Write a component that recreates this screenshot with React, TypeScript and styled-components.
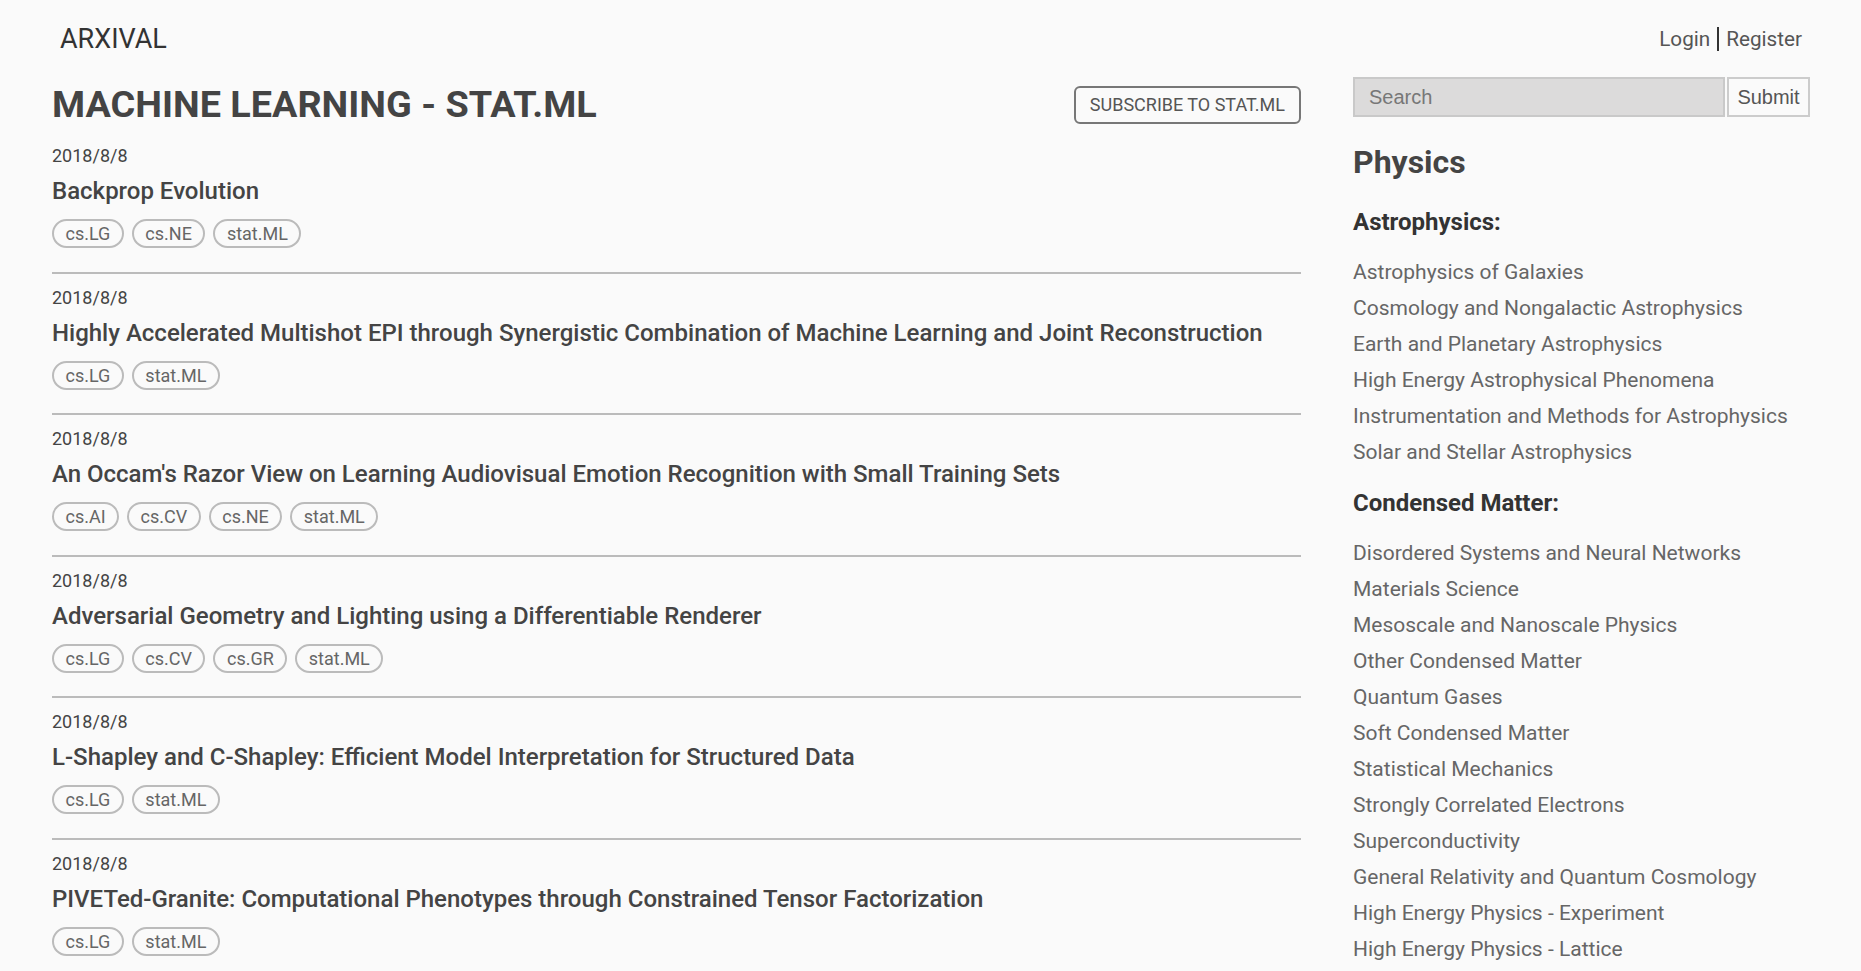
import React from 'react';
import styled, { createGlobalStyle } from 'styled-components';

const GlobalStyle = createGlobalStyle`
  html, body {
    margin: 0;
    padding: 0;
    background: #fafafa;
    font-family: Roboto, "Liberation Sans", sans-serif;
    color: #444;
  }
  * { box-sizing: border-box; }
`;

const Header = styled.header`
  height: 77px;
  padding: 0 59px 0 60px;
  display: flex;
  align-items: center;
  justify-content: space-between;
`;

const Logo = styled.div`
  font-size: 27px;
  color: #333;
`;

const AuthLinks = styled.div`
  display: flex;
  align-items: center;
  gap: 7px;
  font-size: 20.7px;
  color: #555;
`;

const Divider = styled.span`
  width: 2px;
  height: 24px;
  background: #333;
`;

const Main = styled.main`
  display: grid;
  grid-template-columns: 1fr 457px;
  gap: 52px;
  padding: 0 51px 0 52px;
`;

const Feed = styled.section`
  display: flex;
  flex-direction: column;
`;

const TitleRow = styled.div`
  height: 55px;
  display: flex;
  align-items: center;
  justify-content: space-between;
`;

const PageTitle = styled.h1`
  margin: -2px 0 0;
  font-size: 37.8px;
  font-weight: 700;
  color: #444;
`;

const SubscribeButton = styled.button`
  height: 38px;
  padding: 0 14px;
  border: 2px solid #777;
  border-radius: 6px;
  background: transparent;
  font-family: Roboto, sans-serif;
  font-size: 18px;
  color: #555;
`;

const Entry = styled.article`
  padding: 13px 0 23.5px;
  border-bottom: 2px solid #bbb;
`;

const EntryDate = styled.div`
  font-size: 18px;
  line-height: 22px;
  color: #444;
  margin-bottom: 9px;
`;

const EntryTitle = styled.h2`
  margin: 0;
  font-size: 24px;
  line-height: 30px;
  font-weight: 500;
  color: #444;
`;

const Tags = styled.div`
  display: flex;
  gap: 8px;
  margin-top: 13px;
`;

const Tag = styled.span`
  height: 29px;
  padding: 0 11.5px;
  border: 2px solid #bbb;
  border-radius: 15px;
  font-size: 18px;
  line-height: 25px;
  color: #666;
`;

const Sidebar = styled.aside`
  display: flex;
  flex-direction: column;
`;

const SearchRow = styled.form`
  display: flex;
  gap: 2px;
  height: 40px;
`;

const SearchInput = styled.input`
  flex: 1;
  min-width: 0;
  height: 40px;
  border: 2px solid #c9c9c9;
  background: #dcdbdb;
  padding: 0 14px;
  font-family: "Liberation Sans", Arial, sans-serif;
  font-size: 20px;
  color: #444;
  &::placeholder { color: #777; }
`;

const SubmitButton = styled.button`
  width: 83px;
  height: 40px;
  border: 2px solid #ccc;
  background: #fafafa;
  font-family: "Liberation Sans", Arial, sans-serif;
  font-size: 20px;
  color: #555;
  padding: 0;
`;

const CategoryTitle = styled.h2`
  margin: 25px 0 0;
  font-size: 32px;
  line-height: 40px;
  font-weight: 700;
  color: #444;
`;

const GroupTitle = styled.h3<{ first?: boolean }>`
  margin: ${({ first }) => (first ? '25px' : '18px')} 0 17px;
  font-size: 24px;
  line-height: 30px;
  font-weight: 700;
  color: #333;
`;

const TopicList = styled.ul`
  list-style: none;
  margin: 0;
  padding: 0;
`;

const Topic = styled.li`
  font-size: 21px;
  line-height: 36px;
  color: #666;
`;

const entries = [
  { date: '2018/8/8', title: 'Backprop Evolution', tags: ['cs.LG', 'cs.NE', 'stat.ML'] },
  {
    date: '2018/8/8',
    title: 'Highly Accelerated Multishot EPI through Synergistic Combination of Machine Learning and Joint Reconstruction',
    tags: ['cs.LG', 'stat.ML'],
  },
  {
    date: '2018/8/8',
    title: "An Occam's Razor View on Learning Audiovisual Emotion Recognition with Small Training Sets",
    tags: ['cs.AI', 'cs.CV', 'cs.NE', 'stat.ML'],
  },
  {
    date: '2018/8/8',
    title: 'Adversarial Geometry and Lighting using a Differentiable Renderer',
    tags: ['cs.LG', 'cs.CV', 'cs.GR', 'stat.ML'],
  },
  {
    date: '2018/8/8',
    title: 'L-Shapley and C-Shapley: Efficient Model Interpretation for Structured Data',
    tags: ['cs.LG', 'stat.ML'],
  },
  {
    date: '2018/8/8',
    title: 'PIVETed-Granite: Computational Phenotypes through Constrained Tensor Factorization',
    tags: ['cs.LG', 'stat.ML'],
  },
  {
    date: '2018/8/7',
    title: 'Deep Learning for Classification Tasks on Geospatial Vector Polygons',
    tags: ['cs.LG', 'stat.ML'],
  },
];

const groups = [
  {
    name: 'Astrophysics:',
    topics: [
      'Astrophysics of Galaxies',
      'Cosmology and Nongalactic Astrophysics',
      'Earth and Planetary Astrophysics',
      'High Energy Astrophysical Phenomena',
      'Instrumentation and Methods for Astrophysics',
      'Solar and Stellar Astrophysics',
    ],
  },
  {
    name: 'Condensed Matter:',
    topics: [
      'Disordered Systems and Neural Networks',
      'Materials Science',
      'Mesoscale and Nanoscale Physics',
      'Other Condensed Matter',
      'Quantum Gases',
      'Soft Condensed Matter',
      'Statistical Mechanics',
      'Strongly Correlated Electrons',
      'Superconductivity',
      'General Relativity and Quantum Cosmology',
      'High Energy Physics - Experiment',
      'High Energy Physics - Lattice',
      'High Energy Physics - Phenomenology',
      'High Energy Physics - Theory',
      'Mathematical Physics',
    ],
  },
];

export default function App() {
  return (
    <>
      <GlobalStyle />
      <Header>
        <Logo>ARXIVAL</Logo>
        <AuthLinks>
          <span>Login</span>
          <Divider />
          <span>Register</span>
        </AuthLinks>
      </Header>
      <Main>
        <Feed>
          <TitleRow>
            <PageTitle>MACHINE LEARNING - STAT.ML</PageTitle>
            <SubscribeButton>SUBSCRIBE TO STAT.ML</SubscribeButton>
          </TitleRow>
          {entries.map((e, i) => (
            <Entry key={i}>
              <EntryDate>{e.date}</EntryDate>
              <EntryTitle>{e.title}</EntryTitle>
              <Tags>
                {e.tags.map((t) => (
                  <Tag key={t}>{t}</Tag>
                ))}
              </Tags>
            </Entry>
          ))}
        </Feed>
        <Sidebar>
          <SearchRow onSubmit={(ev) => ev.preventDefault()}>
            <SearchInput placeholder="Search" />
            <SubmitButton type="submit">Submit</SubmitButton>
          </SearchRow>
          <CategoryTitle>Physics</CategoryTitle>
          {groups.map((g, i) => (
            <div key={g.name}>
              <GroupTitle first={i === 0}>{g.name}</GroupTitle>
              <TopicList>
                {g.topics.map((t) => (
                  <Topic key={t}>{t}</Topic>
                ))}
              </TopicList>
            </div>
          ))}
        </Sidebar>
      </Main>
    </>
  );
}
